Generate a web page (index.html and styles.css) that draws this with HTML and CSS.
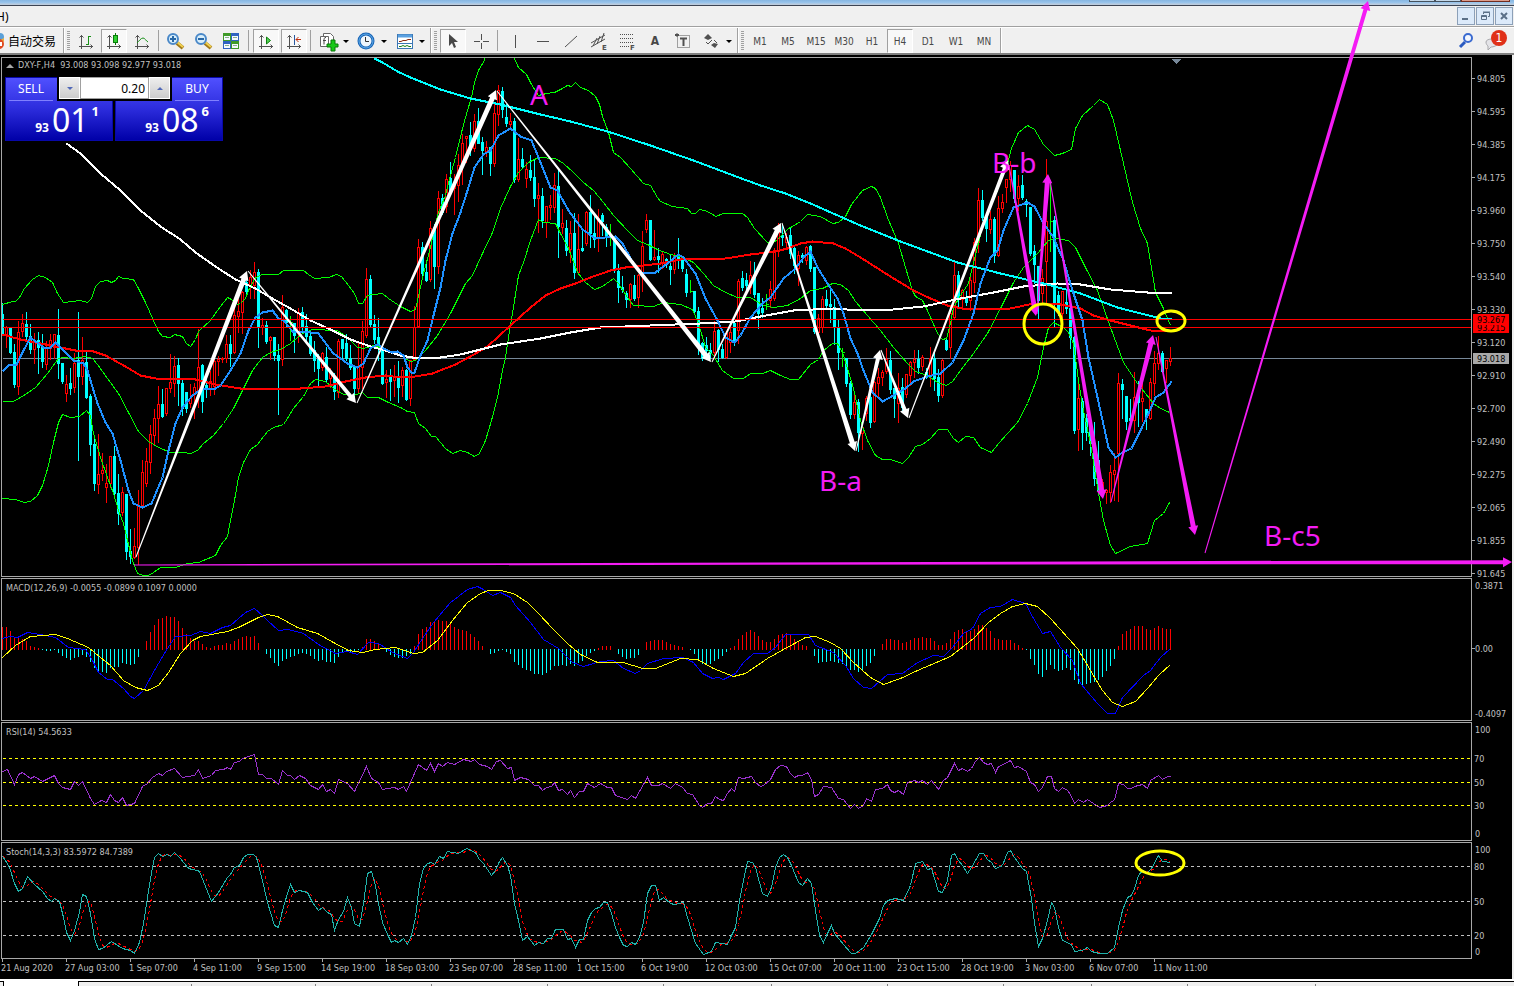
FILE: index.html
```html
<!DOCTYPE html>
<html lang="zh-CN">
<head>
    <meta charset="UTF-8">
    <meta name="viewport" content="width=device-width, initial-scale=1.0">
    <title>DXY-F,H4</title>
    <link rel="stylesheet" href="styles.css">
</head>
<body>
    <div class="titlebar">
        <div class="window-buttons"><i></i><i></i><i class="close"></i></div>
    </div>

    <div class="menubar">
        <span class="menu-title">H)</span>
        <div class="mdi-buttons">
            <button type="button" aria-label="Minimize"><svg width="10" height="10"><path d="M1 8h6" stroke="#5b7088" stroke-width="2"/></svg></button>
            <button type="button" aria-label="Restore"><svg width="10" height="10" fill="none" stroke="#5b7088"><path d="M3.500 3V1.500h6v4H8M3 1h7"/><path d="M1.500 4.500h5v4h-5zM1 5.500h6"/></svg></button>
            <button type="button" aria-label="Close"><svg width="10" height="10"><path d="M2 2l6 6M8 2l-6 6" stroke="#5b7088" stroke-width="2"/></svg></button>
        </div>
    </div>

    <div class="toolbar">
        <button type="button" class="auto-trade">
            <svg width="6" height="18"><circle cx="0" cy="5" r="4" fill="#5aa0d8"/><path d="M0 8l4-2v4z" fill="#e8b040"/><circle cx="-1" cy="12" r="5" fill="#e04a20"/><rect x="0" y="10" width="2" height="4" fill="#fff"/></svg>
            自动交易
        </button>
        <div class="edge"></div>
        <div class="grip"></div>

        <button type="button" class="tool" aria-label="Bar chart"><svg viewBox="0 0 20 20"><path class="axis" d="M5.500 4v14M3 15.500h14M3.500 6.500l2-2 2 2M14.500 13.500l2 2-2 2"/><path d="M12.500 5v9M13 5.500h2M10 13.500h2" stroke="#189018" fill="none"/></svg></button>
        <button type="button" class="tool pressed" aria-label="Candlesticks"><svg viewBox="0 0 20 20"><path class="axis" d="M5.500 4v14M3 15.500h14M3.500 6.500l2-2 2 2M14.500 13.500l2 2-2 2"/><path d="M11.500 2v12" stroke="#0a7a0a"/><rect x="9.500" y="4.500" width="4" height="7" fill="#2fd02f" stroke="#0a7a0a"/></svg></button>
        <button type="button" class="tool" aria-label="Line chart"><svg viewBox="0 0 20 20"><path class="axis" d="M5.500 4v14M3 15.500h14M3.500 6.500l2-2 2 2M14.500 13.500l2 2-2 2"/><path d="M5 12c2-2 4-5 6-5s3 3 5 4" stroke="#189018" fill="none"/></svg></button>
        <div class="sep"></div>
        <button type="button" class="tool" aria-label="Zoom in"><svg viewBox="0 0 20 20"><path d="M11 12l6 5" stroke="#a07818" stroke-width="4"/><path d="M11 11l6 5" stroke="#f0d050" stroke-width="2"/><circle cx="7" cy="8" r="5" fill="#d8eefa" stroke="#4a88c8" stroke-width="2"/><path d="M7 5v6M4 8h6" stroke="#2868a8" stroke-width="2"/></svg></button>
        <button type="button" class="tool" aria-label="Zoom out"><svg viewBox="0 0 20 20"><path d="M11 12l6 5" stroke="#a07818" stroke-width="4"/><path d="M11 11l6 5" stroke="#f0d050" stroke-width="2"/><circle cx="7" cy="8" r="5" fill="#d8eefa" stroke="#4a88c8" stroke-width="2"/><path d="M4 8h6" stroke="#2868a8" stroke-width="2"/></svg></button>
        <button type="button" class="tool" aria-label="Tile windows"><svg viewBox="0 0 20 20"><path d="M1 2h8v8H1zM9 10h8v8H9z" fill="#3f9a28"/><path d="M9 2h8v8H9zM1 10h8v8H1z" fill="#2f62c0"/><path d="M2 5h6v4H2zM10 5h6v4h-6zM2 13h6v4H2zM10 13h6v4h-6z" fill="#f4f8ff"/><path d="M3 6.500h4M11 6.500h4M3 14.500h4M11 14.500h4" stroke="#8ab08a"/></svg></button>
        <div class="sep"></div>
        <button type="button" class="tool pressed" aria-label="Auto scroll"><svg viewBox="0 0 20 20"><path class="axis" d="M5.500 4v14M3 15.500h14M3.500 6.500l2-2 2 2M14.500 13.500l2 2-2 2"/><path d="M10.500 6v7l4-3.500z" fill="#50d050" stroke="#108010"/></svg></button>
        <button type="button" class="tool pressed" aria-label="Chart shift"><svg viewBox="0 0 20 20"><path class="axis" d="M5.500 4v14M3 15.500h14M3.500 6.500l2-2 2 2M14.500 13.500l2 2-2 2"/><path d="M10.500 4v10" stroke="#2858a0"/><path d="M12 8.500h5M14.500 6L12 8.500l2.500 2.500" stroke="#c03010" fill="none"/></svg></button>
        <div class="sep"></div>
        <button type="button" class="tool" aria-label="Indicators"><svg viewBox="0 0 20 20"><path d="M5.500 2.500h7l3 3v9h-10z" fill="#fff" stroke="#666"/><path d="M2.500 5.500h8v10h-8z" fill="#fff" stroke="#666"/><path d="M8 6.500c-2 0-2 1-2 3v4M5 9.500h3" stroke="#444" fill="none"/><path d="M9 13h4V9h4v4h3v3h-3v4h-4v-4H9z" fill="#18c818" stroke="#087808"/></svg></button>
        <button type="button" class="drop" aria-label="Indicators list"></button>
        <button type="button" class="tool" aria-label="Periods"><svg viewBox="0 0 20 20"><circle cx="10" cy="10" r="7" fill="#eef6fd" stroke="#1763b5" stroke-width="3"/><circle cx="10" cy="10" r="7" fill="none" stroke="#62aeea"/><path d="M9.500 6v4.500H13" stroke="#333" fill="none"/></svg></button>
        <button type="button" class="drop" aria-label="Periods list"></button>
        <button type="button" class="tool" aria-label="Templates"><svg viewBox="0 0 20 20"><rect x="3.500" y="3.500" width="15" height="14" fill="#fff" stroke="#3c78b4"/><path d="M4 5h14" stroke="#5aa0e0" stroke-width="3"/><path d="M4 12.500h14" stroke="#3c78b4"/><path d="M5 10.500h2l2-1h3l2-1h3" stroke="#8a2a10" fill="none"/><path d="M5 15.500h2l2-1 2 1 2-1 2 1h2" stroke="#188018" fill="none"/></svg></button>
        <button type="button" class="drop" aria-label="Templates list"></button>
        <div class="edge"></div>
        <div class="grip"></div>

        <button type="button" class="tool pressed" aria-label="Cursor"><svg viewBox="0 0 20 20"><path d="M6 3v12l3-3 2 5 2-1-2-5h4z" fill="#484848"/></svg></button>
        <button type="button" class="tool" aria-label="Crosshair"><svg viewBox="0 0 20 20"><path class="axis" d="M10.500 3v6M10.500 12v6M3 10.500h6M12 10.500h6"/></svg></button>
        <div class="sep"></div>
        <button type="button" class="tool" aria-label="Vertical line"><svg viewBox="0 0 20 20"><path class="axis" d="M10.500 4v13"/></svg></button>
        <button type="button" class="tool" aria-label="Horizontal line"><svg viewBox="0 0 20 20"><path class="axis" d="M4 10.500h12"/></svg></button>
        <button type="button" class="tool" aria-label="Trendline"><svg viewBox="0 0 20 20"><path d="M4 16L16 5" stroke="#505050"/></svg></button>
        <button type="button" class="tool" aria-label="Channel"><svg viewBox="0 0 20 20"><path d="M2 12L16 4M2 16l14-8M4 15l4-8M8 13l3-8M12 11l3-9" stroke="#505050"/><text x="13" y="19" class="tiny">E</text></svg></button>
        <button type="button" class="tool" aria-label="Fibonacci"><svg viewBox="0 0 20 20"><path d="M3 3.500h14M3 7.500h14M3 11.500h14M3 15.500h9" stroke="#505050" stroke-dasharray="1 1"/><text x="13" y="19" class="tiny">F</text></svg></button>
        <button type="button" class="tool letter" aria-label="Text">A</button>
        <button type="button" class="tool" aria-label="Text label"><svg viewBox="0 0 20 20"><rect x="4.500" y="4.500" width="12" height="12" fill="none" stroke="#505050" stroke-dasharray="1 1"/><path d="M7 7.500h7M10.500 7v8M2 4h4M4 2.500v3" stroke="#505050" stroke-width="2"/></svg></button>
        <button type="button" class="tool" aria-label="Arrows"><svg viewBox="0 0 20 20"><path d="M3 7l4-4 4 4-4 2zM10 14l3-2 4 1-3 4z" fill="#505050"/><path d="M5 11l2 2 4-4M13 9l3 3" stroke="#505050" fill="none"/></svg></button>
        <button type="button" class="drop" aria-label="Arrows list"></button>
        <div class="edge"></div>
        <div class="grip"></div>

        <button type="button" class="tool period">M1</button>
        <button type="button" class="tool period">M5</button>
        <button type="button" class="tool period">M15</button>
        <button type="button" class="tool period">M30</button>
        <button type="button" class="tool period">H1</button>
        <button type="button" class="tool period pressed">H4</button>
        <button type="button" class="tool period">D1</button>
        <button type="button" class="tool period">W1</button>
        <button type="button" class="tool period">MN</button>
        <div class="edge"></div>

        <div class="toolbar-right">
            <button type="button" class="tool" aria-label="Search"><svg viewBox="0 0 20 20"><path d="M4 16l5-5" stroke="#2a5ac0" stroke-width="3"/><circle cx="12" cy="7" r="4" fill="#f4f8ff" stroke="#3a6ad0" stroke-width="2"/></svg></button>
            <button type="button" class="tool" aria-label="Messages"><svg viewBox="0 0 20 20"><path d="M2 11c0-4 12-4 12 0s-5 5-7 5l-3 3v-4c-1-1-2-2-2-4z" fill="#e4e4e8" stroke="#a8a8ac"/></svg><span class="badge">1</span></button>
        </div>
    </div>

    <main class="chart-window">
        <section class="pane">
            <svg class="plot" id="price" height="518"></svg>
            <svg class="scale" id="price-scale" height="518"></svg>
            <div class="symbol"><svg width="8" height="4"><path d="M0 4l4-4 4 4z" fill="#a8a8a8"/></svg>DXY-F,H4&nbsp; 93.008 93.098 92.977 93.018</div>
            <form class="one-click">
                <button type="button" class="side sell"><span class="side-name">SELL</span><span class="quote"><small>93</small><b>01</b><sup>1</sup></span></button>
                <button type="button" class="side buy"><span class="side-name">BUY</span><span class="quote"><small>93</small><b>08</b><sup>6</sup></span></button>
                <div class="lots">
                    <button type="button" class="down" aria-label="Less"></button>
                    <input type="text" value="0.20" aria-label="Volume">
                    <button type="button" class="up" aria-label="More"></button>
                </div>
            </form>
        </section>
        <section class="pane">
            <svg class="plot" id="macd" height="141"></svg>
            <svg class="scale" id="macd-scale" height="141"></svg>
            <div class="legend">MACD(12,26,9) -0.0055 -0.0899 0.1097 0.0000</div>
        </section>
        <section class="pane">
            <svg class="plot" id="rsi" height="117"></svg>
            <svg class="scale" id="rsi-scale" height="117"></svg>
            <div class="legend">RSI(14) 54.5633</div>
        </section>
        <section class="pane">
            <svg class="plot" id="stoch" height="115"></svg>
            <svg class="scale" id="stoch-scale" height="115"></svg>
            <div class="legend">Stoch(14,3,3) 83.5972 84.7389</div>
        </section>
        <ol class="time-scale">
            <li>21 Aug 2020</li><li>27 Aug 03:00</li><li>1 Sep 07:00</li><li>4 Sep 11:00</li><li>9 Sep 15:00</li>
            <li>14 Sep 19:00</li><li>18 Sep 03:00</li><li>23 Sep 07:00</li><li>28 Sep 11:00</li><li>1 Oct 15:00</li>
            <li>6 Oct 19:00</li><li>12 Oct 03:00</li><li>15 Oct 07:00</li><li>20 Oct 11:00</li><li>23 Oct 15:00</li>
            <li>28 Oct 19:00</li><li>3 Nov 03:00</li><li>6 Nov 07:00</li><li>11 Nov 11:00</li>
        </ol>
    </main>

    <div class="tabs" id="tabs"></div>

    <svg class="drawings" id="drawings">
        <g id="arrows"></g>
        <g class="marks">
            <ellipse cx="1043" cy="324" rx="19" ry="20"/>
            <ellipse cx="1171" cy="321" rx="14" ry="10"/>
            <ellipse cx="1160" cy="863" rx="24" ry="12"/>
        </g>
        <g class="waves">
            <text x="530" y="105">A</text>
            <text x="819" y="491">B-a</text>
            <text x="992" y="173">B-b</text>
            <text x="1264" y="546">B-c5</text>
        </g>
    </svg>

    <script src="chart.js"></script>
</body>
</html>
```
FILE: styles.css
```css
/* Global Styles */
* {
    box-sizing: border-box;
}

body {
    margin: 0;
    min-height: 100vh;
    position: relative;
    display: flex;
    flex-direction: column;
    overflow: hidden;
    background: #f0f0f0;
    font-family: "DejaVu Sans Condensed", "DejaVu Sans", "Noto Sans CJK SC", sans-serif;
    font-size: 9px;
}

button {
    margin: 0;
    padding: 0;
    border: none;
    background: none;
    font-family: inherit;
}

/* Window frame */
.titlebar {
    height: 6px;
    display: flex;
    justify-content: flex-end;
    padding-right: 4px;
    background: linear-gradient(#86b6e2, #9cc6ec 3px, #bccbdc 4px, #bccbdc);
    border-bottom: 1px solid #3c4454;
}

.window-buttons {
    display: flex;
    width: 101px;
    height: 2px;
}

.window-buttons i {
    flex: 1;
    background: #c4d8ea;
    border: 1px solid #44505c;
    border-top: none;
}

.window-buttons .close {
    flex: 2;
    background: #dc9c8c;
    border-color: #702c20;
}

.menubar {
    height: 21px;
    display: flex;
    justify-content: space-between;
    align-items: center;
    border-bottom: 1px solid #a0a0a0;
}

.menu-title {
    font-family: "Noto Sans", sans-serif;
    font-size: 12px;
    margin-left: -4px;
}

.mdi-buttons {
    display: flex;
    gap: 1px;
    padding-right: 1px;
}

.mdi-buttons button {
    width: 18px;
    height: 18px;
    display: flex;
    justify-content: center;
    align-items: center;
    background: #dceafa;
    border: 1px solid #8ca0b8;
}

/* Toolbar */
.toolbar {
    height: 28px;
    display: flex;
    align-items: center;
    border-top: 1px solid #fff;
    border-bottom: 2px solid #808080;
}

.auto-trade {
    width: 61px;
    display: flex;
    align-items: center;
    gap: 2px;
    font-family: "Noto Sans CJK SC", sans-serif;
    font-size: 12px;
    line-height: 18px;
    white-space: nowrap;
}

.edge {
    width: 2px;
    height: 25px;
    margin-left: 2px;
    background: #fff;
    border-left: 1px solid #a0a0a0;
}

.grip {
    width: 3px;
    height: 19px;
    margin: 0 2px;
    background: repeating-linear-gradient(#a0a0a0 0 1px, #f0f0f0 1px 2px);
}

.tool {
    width: 26px;
    height: 24px;
    margin: 0 1px;
    display: flex;
    justify-content: center;
    align-items: center;
    position: relative;
    color: #484848;
}

.tool svg {
    width: 20px;
    height: 20px;
    overflow: visible;
}

.axis {
    fill: none;
    stroke: #505050;
}

.tiny {
    font: bold 7px "DejaVu Sans", sans-serif;
    fill: #505050;
}

.pressed {
    background: #f8f8f8;
    border: 1px solid #fff;
    border-top-color: #a0a0a0;
    border-left-color: #a0a0a0;
}

.letter {
    font-size: 12px;
    font-weight: bold;
}

.period {
    padding-top: 2px;
    font-size: 10px;
}

.drop {
    width: 10px;
    height: 24px;
}

.drop::before {
    content: "";
    display: block;
    width: 0;
    margin: 2px auto 0 1px;
    border: 3px solid transparent;
    border-top-color: #000;
    border-bottom: none;
}

.sep {
    width: 1px;
    height: 21px;
    margin: 0 3px 0 2px;
    background: #a0a0a0;
}

.toolbar-right {
    display: flex;
    margin-left: auto;
    padding-right: 6px;
}

.badge {
    position: absolute;
    top: 1px;
    right: 0;
    width: 16px;
    height: 16px;
    border-radius: 8px;
    background: #e03018;
    color: #fff;
    font-size: 12px;
    line-height: 16px;
}

/* Chart window */
.chart-window {
    flex: 1;
    margin-right: 2px;
    padding: 2px 0 0 1px;
    background: #000;
    color: #c0c0c0;
}

.pane {
    position: relative;
    display: flex;
    margin-bottom: 1px;
}

.plot {
    flex: 1;
    min-width: 0;
    box-sizing: content-box;
    display: block;
    border: 1px solid #a8a8a8;
    shape-rendering: crispEdges;
    fill: none;
}

.scale {
    width: 40px;
    margin-top: 1px;
    display: block;
    overflow: visible;
    fill: #c0c0c0;
}

.scale path {
    stroke: #a8a8a8;
    shape-rendering: crispEdges;
}

.legend,
.symbol {
    position: absolute;
    left: 5px;
    line-height: 12px;
    white-space: nowrap;
}

.legend {
    top: 4px;
}

.symbol {
    top: 2px;
}

.symbol svg {
    margin-right: 4px;
}

.up-candle {
    stroke: #f00;
    fill: #000;
}

.down-candle {
    stroke: #0ff;
    fill: #0ff;
}

.doji {
    stroke: #0f0;
}

.band {
    stroke: #0f0;
}

.ma-red {
    stroke: #f00;
    stroke-width: 2;
}

.ma-white {
    stroke: #fff;
    stroke-width: 2;
}

.ma-cyan {
    stroke: #0ff;
    stroke-width: 2;
}

.ma-blue {
    stroke: #1e90ff;
    stroke-width: 2;
}

.order-line {
    stroke: #f00;
}

.bid-line {
    stroke: #778899;
}

.shift-mark {
    fill: #778899;
}

.macd-line {
    stroke: #00f;
}

.signal-line {
    stroke: #ff0;
}

.rsi-line {
    stroke: #9932cc;
}

.rsi-level {
    stroke: #ff0;
    stroke-dasharray: 3 3;
}

.stoch-line {
    stroke: #20b2aa;
}

.stoch-signal {
    stroke: #f00;
    stroke-dasharray: 3 3;
}

.stoch-level {
    stroke: #c0c0c0;
    stroke-dasharray: 3 3;
}

.time-scale {
    height: 20px;
    margin: -1px 0 0;
    padding: 0;
    display: flex;
    list-style: none;
    white-space: nowrap;
}

.time-scale li {
    flex: none;
    width: 64px;
    line-height: 13px;
}

.time-scale li::before {
    content: "";
    display: block;
    width: 1px;
    height: 3px;
    margin-left: 1px;
    background: #a8a8a8;
}

/* One click trading panel */
.one-click {
    position: absolute;
    top: 20px;
    left: 4px;
    width: 218px;
    display: grid;
    grid-template-columns: 1fr 1fr;
    gap: 2px;
    font-family: "Noto Sans", sans-serif;
}

.side {
    height: 64px;
    display: flex;
    flex-direction: column;
    background: linear-gradient(#5050ff, #2c2cdc 50%, #0000a8);
    border: 1px solid #0808a8;
    color: #fff;
    font-family: inherit;
}

.side-name {
    width: 44px;
    height: 23px;
    margin: 0 3px;
    border-bottom: 1px solid #8080ff;
    font-size: 12px;
    line-height: 22px;
}

.buy .side-name {
    align-self: flex-end;
}

.quote {
    width: 100%;
    display: flex;
    justify-content: flex-end;
    align-items: flex-end;
    padding-right: 13px;
    gap: 3px;
    line-height: 38px;
}

.quote small {
    font-size: 12px;
    font-weight: bold;
    line-height: 22px;
}

.quote b {
    font-size: 32px;
    font-weight: normal;
}

.quote sup {
    align-self: flex-start;
    font-size: 13px;
    font-weight: bold;
    line-height: 20px;
}

.lots {
    position: absolute;
    top: 0;
    left: 52px;
    width: 115px;
    height: 24px;
    display: flex;
    padding: 0 2px 2px;
    background: #000;
}

.lots input {
    flex: 1;
    min-width: 0;
    padding: 0 3px;
    border: 1px solid #a0a0a0;
    background: #fff;
    font-family: inherit;
    font-size: 12px;
    text-align: right;
}

.lots button {
    width: 21px;
    display: flex;
    justify-content: center;
    align-items: center;
    background: linear-gradient(#eee, #ccc);
    border: 1px solid #fff;
}

.lots button::before {
    content: "";
    border: 3px solid transparent;
}

.lots .down::before {
    border-top-color: #5068b8;
    border-bottom: none;
}

.lots .up::before {
    border-bottom-color: #5068b8;
    border-top: none;
}

/* Chart tabs */
.tabs {
    height: 7px;
    display: flex;
    padding-left: 3px;
    border-top: 2px solid #fff;
    background: linear-gradient(#000 1px, #f0f0f0 1px);
}

.tabs span {
    flex: none;
    margin-top: 3px;
    border-right: 1px solid #808080;
}

.tabs .active {
    margin-top: 0;
    background: #fff;
    border: 1px solid #000;
    border-top: none;
    border-bottom: none;
}

/* Wave drawings over the whole window */
.drawings {
    position: absolute;
    top: 0;
    left: 0;
    width: 100%;
    height: 100%;
    pointer-events: none;
}

.arrow-white {
    fill: #fff;
}

.arrow-magenta {
    fill: #f41cf4;
}

.marks {
    fill: none;
    stroke: #ff0;
    stroke-width: 3;
}

.waves {
    fill: #f41cf4;
    font-family: "Noto Sans", sans-serif;
    font-size: 28px;
}
```
FILE: chart.js
```js
const STEP = 4;
const LEFT = 2;

// direction (u, d, or n for no change), high, body top, body bottom, low
const candles = `
d 302 314 334 334;u 325 327 334 347;d 326 328 352 353;d 343 352 384 387;u 320 332 386 394;u 313 323 331 336;d 311 324 336 340;d 323 336 349 353;u 332 340 349 363;d 331 340 347 373;
d 333 346 361 367;u 340 348 364 369;u 333 340 348 359;u 333 334 347 358;d 308 335 363 378;d 362 363 381 383;u 374 384 393 401;d 367 383 388 394;u 352 363 387 392;d 311 360 376 460;
u 336 360 376 384;d 350 362 397 398;d 393 396 444 455;d 438 444 483 490;u 433 474 484 493;u 452 470 473 480;u 463 483 487 502;u 455 456 483 487;d 445 456 493 495;d 473 493 513 524;
u 486 492 512 515;d 493 494 551 559;d 528 551 556 563;u 527 546 557 558;u 489 505 547 564;u 459 472 505 507;u 447 461 483 486;u 424 434 462 473;u 408 418 435 444;u 385 404 418 442;
d 388 404 416 417;u 387 388 413 415;u 353 382 388 392;u 355 366 383 396;d 357 365 383 405;d 377 383 408 415;d 392 392 408 412;u 383 398 403 407;u 382 387 393 418;u 328 367 392 407;
d 363 365 401 412;d 378 385 387 397;u 370 381 388 395;u 357 361 386 394;u 355 359 361 375;u 356 358 359 362;u 334 344 358 362;d 334 344 353 366;u 303 315 352 353;u 298 311 316 332;
u 290 292 312 333;d 273 282 291 293;u 269 277 286 298;u 261 272 285 298;d 268 272 327 347;u 317 325 327 334;d 320 325 341 343;u 335 337 340 359;d 336 337 355 360;d 343 355 360 414;
u 294 307 359 365;d 308 310 322 327;n 315 322 322 340;d 322 323 335 352;u 307 312 333 342;d 306 312 326 332;d 313 326 336 341;d 332 336 353 355;d 340 350 360 371;d 353 359 368 387;
u 351 353 367 370;d 346 357 379 381;u 367 372 378 387;d 372 377 391 399;u 338 341 392 397;d 339 339 348 358;d 333 343 358 360;d 344 358 367 369;d 365 367 388 396;u 340 367 388 393;
u 320 331 367 388;u 267 279 335 337;d 274 279 324 326;d 314 324 339 343;d 317 337 346 360;d 345 347 383 384;u 369 379 382 397;d 368 377 381 400;u 364 377 380 396;d 360 377 387 402;
u 366 370 385 396;d 368 370 399 400;u 359 360 398 405;u 305 327 359 360;u 238 247 326 327;d 241 247 273 278;d 260 272 280 281;u 220 228 279 281;d 223 229 266 288;u 190 198 266 273;
d 193 198 212 214;u 173 179 206 212;d 161 178 192 193;u 173 183 188 214;u 153 165 185 201;u 133 143 166 184;u 135 136 138 162;d 121 135 148 155;u 113 121 148 151;d 107 121 143 143;
d 136 142 150 174;u 140 147 151 156;d 146 147 163 175;u 102 113 163 166;u 84 90 114 125;d 86 91 109 117;d 103 117 123 126;u 112 121 124 127;d 117 121 179 182;u 137 159 179 181;
d 147 159 166 168;u 161 169 178 187;d 154 170 177 180;d 159 177 198 206;u 182 195 198 232;d 187 196 220 227;u 205 206 222 237;u 194 205 207 219;u 172 185 207 212;d 169 186 226 257;
u 208 223 227 233;d 219 228 250 255;u 220 233 249 262;d 212 233 272 278;u 213 249 272 273;d 227 248 250 251;u 210 212 243 245;d 194 212 233 247;d 212 233 239 247;u 208 218 238 251;
d 212 215 221 235;d 223 227 235 246;n 223 237 237 245;d 235 237 269 272;d 263 271 287 302;d 275 287 289 292;d 290 293 299 307;u 282 284 299 307;d 274 285 298 300;u 273 275 297 307;
u 230 246 275 291;u 213 220 229 232;d 219 220 259 260;u 229 257 259 260;d 247 256 259 272;u 251 254 263 268;d 257 259 262 267;d 254 266 269 284;u 252 256 269 273;d 237 256 259 268;
d 257 260 268 271;d 268 274 292 296;n 279 291 291 292;d 290 291 311 312;d 306 311 343 354;d 341 343 358 360;d 336 345 350 358;d 342 350 353 358;u 320 331 352 358;d 328 330 349 361;
d 343 349 357 358;u 330 333 357 358;u 323 332 342 352;d 320 323 342 345;u 278 281 330 343;d 270 278 287 290;d 272 280 285 293;u 260 275 287 293;d 261 277 294 297;d 292 293 313 328;
d 297 308 312 317;n 293 304 304 309;u 280 289 300 307;u 247 250 298 300;u 222 227 250 256;d 223 235 237 245;u 232 237 242 247;d 227 235 253 258;d 245 248 265 273;u 250 255 268 285;
d 252 255 257 262;u 245 247 260 264;d 244 246 268 271;d 266 267 331 333;u 313 318 332 335;u 295 299 327 332;d 289 299 305 307;d 288 304 306 322;d 298 307 326 344;d 319 327 352 369;
n 347 352 352 366;d 357 358 383 386;d 380 383 414 418;u 392 402 414 418;d 398 402 432 451;u 422 427 433 449;u 395 398 413 420;d 393 397 422 427;u 380 382 421 422;u 367 377 383 397;
u 369 372 377 385;u 347 359 371 373;d 350 360 389 393;d 387 388 398 417;u 372 388 403 422;d 377 387 407 410;u 373 374 394 397;u 360 362 375 385;u 349 359 362 377;d 349 359 367 373;
u 354 357 366 370;d 367 372 377 378;u 346 358 375 386;d 350 358 378 390;d 368 377 395 401;u 358 360 395 397;d 337 340 349 350;u 305 313 347 358;u 261 275 317 318;d 270 275 298 307;
u 288 290 299 308;d 290 297 302 305;u 273 280 300 310;u 237 242 282 292;u 187 200 242 252;d 189 200 217 220;d 213 217 228 241;u 210 219 229 233;d 216 219 255 262;u 195 208 255 256;
u 193 202 208 212;u 178 179 187 202;u 160 165 179 191;d 169 170 198 202;u 174 186 198 210;d 174 185 197 199;d 198 201 204 216;d 206 207 253 255;d 244 251 264 283;d 265 266 300 318;
u 268 278 293 302;u 158 221 261 303;n 182 221 221 251;d 215 220 303 327;d 290 295 312 315;u 290 291 313 317;d 290 302 308 313;d 300 308 337 348;d 335 337 430 433;u 383 398 429 450;
d 397 401 432 449;d 413 418 432 440;d 418 427 443 455;d 421 443 478 485;d 440 460 490 493;u 478 482 490 493;u 488 490 492 503;u 464 472 492 502;u 452 470 474 500;u 372 383 453 501;
d 378 384 389 418;d 395 396 421 429;d 398 418 420 427;u 371 397 420 432;d 380 390 402 426;u 382 398 401 421;d 408 409 417 429;u 377 382 418 419;u 350 363 383 395;u 335 353 363 369;
d 350 353 371 372;u 359 360 368 382;u 346 358 361 365`;

const bandUpper = '2,304 12,301 15,301 19,297 24,288 32,279 38,275 45,277 52,282 57,293 63,302 80,300 87,302 91,298 95,286 100,281 107,280 111,282 115,280 118,276 123,278 133,279 138,288 145,302 153,320 158,331 162,336 170,337 174,334 182,336 186,343 190,346 195,339 198,331 210,320 217,310 227,297 231,299 237,304 240,303 245,298 248,290 255,277 262,274 278,274 283,270 303,270 308,274 314,278 328,277 336,274 341,276 348,285 354,293 358,303 362,303 367,295 373,294 382,293 388,298 400,306 410,311 415,309 417,300 423,273 430,247 434,227 438,212 445,195 450,175 455,157 462,128 467,110 471,97 474,82 478,70 484,60 486,50 512,50 514,58 518,67 526,74 531,84 538,95 546,93 554,92 562,88 567,85 571,86 575,82 580,87 588,90 595,96 599,104 602,116 608,132 613,152 620,157 630,168 643,183 650,185 657,197 660,201 672,206 687,208 691,213 695,213 699,209 704,210 711,213 715,216 723,213 742,213 747,217 754,228 766,241 770,244 777,239 782,234 788,228 792,226 800,221 807,214 820,216 832,223 838,222 845,216 851,204 862,190 871,186 875,188 880,197 887,217 898,243 905,267 912,290 915,296 922,300 927,310 937,333 942,339 946,338 950,323 953,307 960,295 968,283 973,263 978,242 983,223 990,207 997,190 1007,163 1011,148 1018,132 1027,125 1034,129 1043,144 1054,155 1062,153 1071,149 1075,128 1082,115 1093,105 1099,99 1107,104 1113,120 1123,163 1132,202 1140,228 1147,243 1155,292 1163,308 1170,325';
const bandMiddle = '2,401 13,401 25,394 35,387 47,373 58,358 63,357 72,358 85,356 92,358 97,364 107,378 118,393 128,412 138,431 148,441 158,447 170,452 182,452 190,453 197,450 203,443 213,435 223,423 233,408 243,388 252,370 262,357 270,352 280,349 290,343 302,333 312,329 337,330 347,337 357,347 363,348 373,345 383,348 393,353 400,355 410,361 415,360 425,350 437,335 450,313 465,283 472,275 482,253 492,232 500,208 510,186 518,172 528,162 538,157 555,158 563,163 573,172 583,182 593,190 603,202 613,215 627,230 637,240 647,244 657,249 670,254 683,257 693,262 703,273 713,285 725,292 737,297 750,297 763,305 773,307 787,305 800,298 810,290 822,288 832,283 840,284 848,290 855,301 867,315 880,330 893,347 907,363 915,371 927,375 937,382 946,385 952,381 960,370 973,353 987,333 1000,308 1013,282 1023,267 1037,253 1048,240 1055,238 1068,240 1075,247 1085,267 1097,290 1110,327 1123,362 1137,383 1153,403 1160,408 1169,412';
const bandLower = '2,498 15,499 24,502 30,501 37,495 42,485 48,465 53,442 58,422 62,414 70,417 79,416 86,410 90,415 93,433 100,457 107,477 113,493 118,510 123,523 127,540 132,560 137,573 143,575 148,575 153,572 160,567 175,567 187,563 198,562 215,555 220,545 227,536 230,520 234,500 238,477 243,462 250,449 257,444 267,431 273,427 283,424 287,418 293,408 303,396 310,383 315,379 325,381 333,388 343,394 353,395 362,392 367,397 378,397 388,402 400,407 407,411 414,412 418,423 425,428 431,436 435,436 445,448 452,453 460,450 467,452 474,456 479,453 485,440 491,420 497,397 502,370 505,357 508,337 512,313 518,275 523,262 530,240 538,219 543,222 555,223 560,233 568,248 577,272 585,282 594,289 602,286 613,278 618,283 627,297 633,305 653,306 663,302 680,304 692,309 698,323 705,347 713,355 722,370 733,378 743,378 750,373 762,373 770,370 780,375 790,379 798,379 810,364 818,359 823,350 832,343 837,343 842,352 847,368 853,388 860,420 867,440 875,455 882,459 890,459 902,463 908,457 915,446 922,444 930,438 938,429 947,429 953,438 958,442 965,436 973,437 980,447 991,452 998,443 1007,433 1017,422 1027,403 1037,377 1043,347 1048,327 1053,322 1063,327 1068,332 1073,343 1078,380 1083,410 1090,443 1097,487 1103,520 1110,545 1115,553 1130,546 1147,543 1154,520 1163,513 1169,502';
const maRed = '2,334 20,339 45,344 60,347 75,350 90,350 105,355 125,366 140,375 155,378 195,379 215,384 240,388 300,388 325,386 345,381 365,377 385,375 400,377 415,376 432,373 455,364 470,356 487,346 510,325 530,307 545,295 560,288 575,283 590,277 610,270 625,267 660,263 680,259 725,258 750,254 775,251 787,248 800,243 812,241 833,243 845,248 860,257 890,276 913,290 930,298 947,305 967,309 1010,308 1033,303 1060,304 1080,308 1093,315 1110,320 1150,330 1170,331';
const maWhite = '66,143 80,153 100,173 120,190 140,210 160,226 180,239 195,252 215,266 235,279 255,288 270,297 290,308 310,320 330,329 350,339 370,346 385,350 400,355 412,357 440,357 460,354 480,349 500,344 540,338 570,332 600,327 650,325 700,323 735,321 760,316 793,310 833,308 860,310 893,309 923,306 960,298 993,292 1023,286 1057,283 1080,284 1110,289 1147,292 1171,292';
const maCyan = '374,58 382,62 397,71 410,77 440,89 470,98 500,104 540,114 570,121 607,131 650,145 693,160 733,175 760,185 785,193 810,203 860,225 900,241 957,262 1000,273 1043,283 1080,293 1117,307 1160,318 1171,319';
const maBlue = '2,371 8,365 16,364 22,352 30,337 43,347 50,347 55,342 62,349 73,360 83,363 87,370 97,403 105,422 112,433 120,460 128,490 133,503 142,507 151,503 162,477 168,450 175,423 182,407 192,395 202,388 215,388 220,385 230,370 240,353 248,330 255,317 262,312 272,310 278,318 283,320 293,332 302,331 318,333 333,353 347,363 357,367 363,363 370,348 377,344 383,348 392,352 397,351 403,355 407,367 411,372 414,372 420,355 427,340 433,315 440,287 445,260 452,233 460,212 467,190 474,167 483,154 490,150 498,135 510,128 520,136 531,140 538,157 550,187 557,190 568,210 582,229 595,238 615,236 622,243 633,263 640,272 655,272 667,263 678,254 683,257 695,273 705,298 717,320 725,337 734,342 740,335 750,317 763,302 770,297 783,278 795,268 803,257 810,251 817,267 827,283 837,298 843,313 850,338 857,353 863,370 872,392 882,401 893,395 905,388 913,381 927,376 940,373 952,362 963,340 973,313 980,283 990,257 997,250 1003,230 1013,207 1027,202 1034,206 1043,223 1053,237 1063,260 1073,293 1082,320 1088,357 1097,397 1108,447 1115,457 1122,452 1131,448 1140,430 1148,413 1155,397 1163,392 1171,381';

const histogram = [22,22,18,11,11,10,8,3,2,1,-1,-2,-2,-1,-4,-7,-9,-11,-9,-8,-6,-8,-13,-19,-23,-23,-24,-19,-18,-18,-14,-15,-16,-15,-8,0,8,17,24,30,31,33,32,32,28,21,15,11,8,8,5,2,1,3,4,4,6,5,8,10,12,13,12,13,6,0,-5,-9,-14,-17,-12,-10,-8,-7,-5,-4,-5,-7,-10,-12,-11,-13,-13,-14,-8,-4,-3,-3,-2,-1,2,10,10,8,6,0,-3,-6,-8,-9,
    -9,-7,-5,3,15,20,22,27,27,29,28,28,25,22,20,19,18,15,12,8,3,0,-5,-4,-2,-1,-3,-5,-13,-16,-19,-21,-22,-25,-25,-26,-24,-21,-17,-17,-16,-17,-15,-17,-14,-12,-7,-4,-2,1,3,3,3,0,-5,-8,-10,-9,-9,-6,0,7,8,9,9,9,7,5,4,3,2,0,-1,-5,-10,-15,-16,-15,-12,-10,-7,-3,1,3,10,14,17,19,17,13,9,7,7,10,14,15,16,14,10,8,
    4,3,0,-7,-14,-13,-13,-12,-13,-14,-15,-18,-21,-21,-23,-22,-17,-14,-7,0,5,10,10,9,9,6,7,9,11,11,12,11,11,8,4,4,6,10,17,19,20,18,18,20,24,24,21,18,11,10,9,9,9,6,4,1,-1,-10,-16,-25,-28,-21,-16,-20,-22,-21,-19,-21,-31,-35,-38,-35,-34,-33,-31,-28,-22,-17,-10,3,15,18,20,23,23,23,20,19,21,23,21,20,20];
const macdSignal = '2,657 15,645 30,636 55,634 67,638 88,647 100,657 110,665 123,680 135,687 147,690 158,685 168,672 180,653 192,640 200,636 227,631 238,627 258,617 267,614 277,616 297,627 317,633 333,642 348,650 362,652 375,649 395,647 413,653 422,652 437,640 452,620 467,602 480,593 488,590 500,590 513,593 527,602 538,613 552,628 567,643 580,654 597,662 623,662 642,668 655,668 680,658 697,659 713,668 733,676 745,673 767,658 783,649 805,637 815,636 830,642 840,648 853,662 870,677 883,684 900,678 917,670 950,656 973,638 988,622 1000,613 1012,606 1025,603 1037,606 1050,618 1077,648 1090,670 1102,690 1112,702 1122,706 1135,701 1147,688 1158,675 1170,664';
const macdMain = '2,638 9,636 17,637 27,632 40,634 55,637 68,647 85,649 92,660 98,672 107,679 112,679 123,688 130,696 134,698 143,690 155,668 167,648 175,636 190,635 200,631 210,633 222,627 230,625 245,612 254,608 262,615 267,620 278,630 288,629 303,633 318,644 335,653 347,651 357,654 368,642 378,643 392,652 407,658 413,652 422,638 433,622 450,602 467,589 477,586 483,589 492,595 500,592 510,597 515,605 530,622 543,639 558,648 572,662 583,666 600,661 613,660 623,668 635,673 640,670 647,663 663,658 682,657 693,662 702,673 712,678 718,677 723,679 735,673 743,662 753,653 767,653 775,647 785,634 808,634 815,645 833,652 845,665 853,678 863,687 871,688 887,674 902,673 917,662 933,655 943,656 952,647 963,633 972,628 980,613 990,607 1000,606 1012,599 1025,603 1033,618 1042,633 1050,631 1060,647 1072,660 1080,683 1097,703 1107,713 1115,713 1122,697 1143,675 1150,670 1160,657 1170,648';
const rsi = '2,771 7,769 14,784 18,774 22,772 30,778 34,776 42,781 54,775 58,783 62,787 70,789 74,781 78,785 82,781 90,798 94,804 101,800 106,802 110,794 114,800 118,802 122,797 126,805 134,803 142,786 147,783 152,777 158,773 162,775 166,771 174,768 182,777 194,775 198,769 202,778 211,775 215,770 223,769 227,767 230,769 234,762 239,761 242,758 254,754 258,774 262,774 266,778 271,778 278,784 282,770 287,775 290,775 294,779 299,775 305,778 310,785 318,789 322,784 326,791 330,789 334,793 338,779 347,783 354,791 366,766 371,778 378,782 382,789 394,787 398,789 403,786 406,791 418,764 426,770 430,763 434,771 438,763 442,766 447,762 454,764 463,759 471,761 474,759 479,764 487,766 491,769 496,761 500,760 507,768 511,767 514,780 520,777 528,779 534,785 538,785 542,790 546,787 551,786 554,782 558,790 562,789 567,794 570,790 574,797 579,791 583,791 587,783 594,787 600,783 607,787 611,787 615,795 627,799 631,795 635,798 647,777 651,785 658,785 662,783 670,788 675,783 682,787 687,793 692,794 699,805 702,807 707,803 711,803 715,796 719,799 723,800 727,793 731,788 734,791 738,777 743,778 751,776 755,782 760,786 763,785 770,779 775,769 780,765 786,766 790,773 794,777 798,775 802,775 807,772 811,779 814,796 818,794 823,786 831,787 838,798 843,799 850,808 854,804 858,808 863,805 866,798 871,801 875,789 882,788 887,784 890,790 894,792 898,790 903,794 907,782 914,780 918,782 922,780 927,784 931,780 938,789 943,780 947,777 954,763 958,770 962,768 967,771 971,768 975,761 979,757 983,762 987,764 991,763 995,772 998,766 1003,764 1010,760 1014,767 1018,766 1026,771 1030,782 1034,784 1038,791 1042,787 1047,776 1051,776 1054,788 1058,791 1062,787 1067,790 1070,794 1074,803 1078,799 1083,802 1087,799 1099,807 1107,805 1111,801 1114,800 1118,783 1123,784 1127,788 1131,788 1134,786 1142,784 1147,788 1150,780 1158,775 1162,779 1167,776 1170,776';
const stoch = '2,856 7,863 10,870 14,883 18,891 22,888 27,876 34,884 42,891 47,898 51,901 54,898 59,901 63,917 66,932 70,940 74,930 79,912 82,894 86,896 90,913 94,938 98,949 102,948 111,941 122,948 130,950 134,953 139,942 143,923 147,897 151,872 154,857 158,853 162,856 167,854 170,856 174,852 180,858 187,867 191,869 197,870 199,871 211,901 218,892 227,877 230,874 234,867 239,865 243,857 247,854 253,854 256,857 262,880 267,902 274,925 278,927 282,910 287,893 290,884 294,892 299,890 307,892 312,902 318,910 322,907 327,912 331,914 334,930 338,919 343,911 347,897 351,907 354,923 359,926 363,903 367,873 371,871 375,885 378,903 382,922 387,934 391,942 394,940 398,942 403,938 407,944 411,935 415,917 419,883 423,868 427,863 431,862 434,864 439,856 443,858 447,851 458,853 466,848 475,852 479,859 483,863 491,875 495,870 499,861 502,857 507,865 510,875 514,903 518,920 522,940 527,936 534,945 538,942 543,943 547,938 551,938 555,929 563,929 567,939 571,938 575,947 579,939 583,939 587,920 591,912 595,908 599,907 603,902 607,902 611,913 615,927 619,937 623,945 627,946 631,942 635,944 639,937 643,922 647,893 651,885 655,885 659,900 663,897 670,903 674,904 683,902 687,917 691,930 695,943 703,954 711,951 715,942 727,944 731,935 735,927 739,900 743,880 747,861 752,862 755,867 762,893 767,896 771,887 775,867 779,857 783,854 787,857 791,865 798,882 802,885 807,878 811,883 815,910 819,935 823,942 827,933 831,925 834,933 843,944 851,953 855,953 863,947 871,934 879,918 883,905 887,900 895,898 903,900 910,885 915,863 922,861 927,869 931,868 938,891 942,892 947,880 951,855 954,853 958,860 962,865 967,873 971,867 979,853 983,853 987,859 991,862 995,868 1000,866 1002,865 1007,852 1010,850 1014,857 1022,868 1026,871 1031,898 1034,923 1038,946 1042,938 1047,920 1051,902 1054,907 1058,927 1062,940 1071,944 1074,951 1082,950 1087,947 1091,951 1099,953 1107,953 1114,947 1118,927 1122,910 1127,897 1131,895 1134,888 1138,875 1142,870 1147,872 1151,868 1158,855 1162,861 1170,862';

function line(points, cls) {
    return `<polyline class="${cls}" points="${points}"/>`;
}

function level(y, cls) {
    return `<path class="${cls}" d="M2 ${y}H9000"/>`;
}

// Each pane keeps window coordinates, shifted by its own top edge
function draw(id, top, content) {
    document.getElementById(id).innerHTML = `<g transform="translate(-1.5 ${0.5 - top})">${content}</g>`;
}

function scale(id, top, labels, tags) {
    let out = '';
    labels.forEach(([y, text, x, tick]) => {
        if (tick) out += `<path d="M0 ${y - top + 0.5}h3"/>`;
        out += `<text x="${x}" y="${y - top + 4}">${text}</text>`;
    });
    (tags || []).forEach(([y, text, color]) => {
        out += `<rect x="1" y="${y - top - 5}" width="36" height="11" fill="${color}"/>`;
        out += `<text x="5" y="${y - top + 4}" fill="#000">${text}</text>`;
    });
    document.getElementById(id).innerHTML = out;
}

// Price pane
let bars = '';
candles.trim().split(';').forEach((row, i) => {
    const [dir, high, top, bottom, low] = row.trim().split(' ');
    const x = LEFT + i * STEP;
    if (dir === 'n') {
        bars += `<path class="doji" d="M${x} ${high}V${low}M${x - 1} ${top}h3"/>`;
    } else if (dir === 'u') {
        bars += `<path class="up-candle" d="M${x} ${high}V${low}"/><rect class="up-candle" x="${x - 1}" y="${top}" width="2" height="${Math.max(1, bottom - top)}"/>`;
    } else {
        bars += `<path class="down-candle" d="M${x} ${high}V${low}"/><rect class="down-candle" x="${x - 1}" y="${top}" width="2" height="${Math.max(1, bottom - top)}"/>`;
    }
});

draw('price', 58,
    level(358, 'bid-line') + bars +
    line(bandUpper, 'band') + line(bandMiddle, 'band') + line(bandLower, 'band') +
    line(maRed, 'ma-red') + line(maWhite, 'ma-white') + line(maCyan, 'ma-cyan') + line(maBlue, 'ma-blue') +
    level(319, 'order-line') + level(327, 'order-line') +
    '<path class="shift-mark" d="M1170 58h11l-5 5z"/>');

const prices = ['94.805', '94.595', '94.385', '94.175', '93.960', '93.750', '93.540', '93.330', '93.120', '92.910', '92.700', '92.490', '92.275', '92.065', '91.855', '91.645'];
scale('price-scale', 58, prices.map((p, i) => [78 + i * 33, p, 5, true]), [
    [327, '93.215', '#f00'],
    [319, '93.267', '#f00'],
    [358, '93.018', '#a8a8a8']
]);

// MACD pane
let columns = '';
histogram.forEach((v, i) => {
    if (v !== 0) columns += `<path stroke="${v > 0 ? '#f00' : '#0ff'}" d="M${LEFT + i * STEP} ${v > 0 ? 649 : 648}V${648 - v}"/>`;
});
draw('macd', 579, columns + line(macdMain, 'macd-line') + line(macdSignal, 'signal-line'));
scale('macd-scale', 579, [[585, '0.3871', 3], [648, '0.00', 3, true], [713, '-0.4097', 3]]);

// RSI pane
draw('rsi', 723, level(758, 'rsi-level') + level(782, 'rsi-level') + level(805, 'rsi-level') + line(rsi, 'rsi-line'));
scale('rsi-scale', 723, [[729, '100', 3], [758, '70', 2], [782, '50', 2], [805, '30', 2], [833, '0', 3]]);

// Stochastic pane, the signal is a 3 bar average of the main line
const knots = stoch.split(' ').map(p => p.split(',').map(Number));
function valueAt(x) {
    const k = knots.findIndex(p => p[0] >= x);
    if (k <= 0) return knots[0][1];
    const [x0, y0] = knots[k - 1];
    const [x1, y1] = knots[k];
    return y0 + (y1 - y0) * (x - x0) / (x1 - x0);
}
let signal = '';
for (let x = LEFT; x <= 1170; x += STEP) {
    signal += `${x},${Math.round((valueAt(x) + valueAt(x - STEP) + valueAt(x - 2 * STEP)) / 3)} `;
}
draw('stoch', 843, level(866, 'stoch-level') + level(901, 'stoch-level') + level(935, 'stoch-level') + line(signal.trim(), 'stoch-signal') + line(stoch, 'stoch-line'));
scale('stoch-scale', 843, [[849, '100', 3], [866, '80', 2], [901, '50', 2], [935, '20', 2], [951, '0', 3]]);

// Tapered arrows: x1, y1, x2, y2, tail width, head-end width, color
const arrows = [
    [136, 557, 247, 271, 1, 5, 'white'],
    [248, 271, 356, 403, 1, 4, 'white'],
    [357, 403, 496, 90, 1, 5, 'white'],
    [497, 91, 711, 362, 1, 5, 'white'],
    [712, 362, 781, 223, 1, 5, 'white'],
    [782, 223, 855, 451, 1, 5, 'white'],
    [856, 451, 880, 350, 1, 4, 'white'],
    [881, 350, 908, 418, 1, 4, 'white'],
    [909, 418, 1008, 160, 1, 4, 'white'],
    [1009, 165, 1036, 316, 1, 5, 'magenta'],
    [1037, 314, 1048, 174, 1, 5, 'magenta'],
    [1050, 180, 1103, 499, 1, 5, 'magenta'],
    [1111, 502, 1153, 335, 1, 5, 'magenta'],
    [1156, 337, 1195, 535, 1, 5, 'magenta'],
    [1205, 553, 1368, 1, 1, 4, 'magenta'],
    [134, 565, 1512, 562, 1, 4, 'magenta']
];

document.getElementById('arrows').innerHTML = arrows.map(([x1, y1, x2, y2, w1, w2, color]) => {
    const length = Math.hypot(x2 - x1, y2 - y1);
    const angle = Math.atan2(y2 - y1, x2 - x1) * 180 / Math.PI;
    const neck = length - 9;
    return `<path class="arrow-${color}" transform="translate(${x1} ${y1}) rotate(${angle.toFixed(2)})" d="M0 ${-w1 / 2}L${neck} ${-w2 / 2}V-5L${length} 0L${neck} 5V${w2 / 2}L0 ${w1 / 2}z"/>`;
}).join('');

// Chart tabs
const tabWidths = [76, 113, 124, 116, 116, 116, 108, 116, 116, 88, 96, 128];
document.getElementById('tabs').innerHTML = tabWidths.map((w, i) => `<span${i ? '' : ' class="active"'} style="width:${w}px"></span>`).join('');
```
